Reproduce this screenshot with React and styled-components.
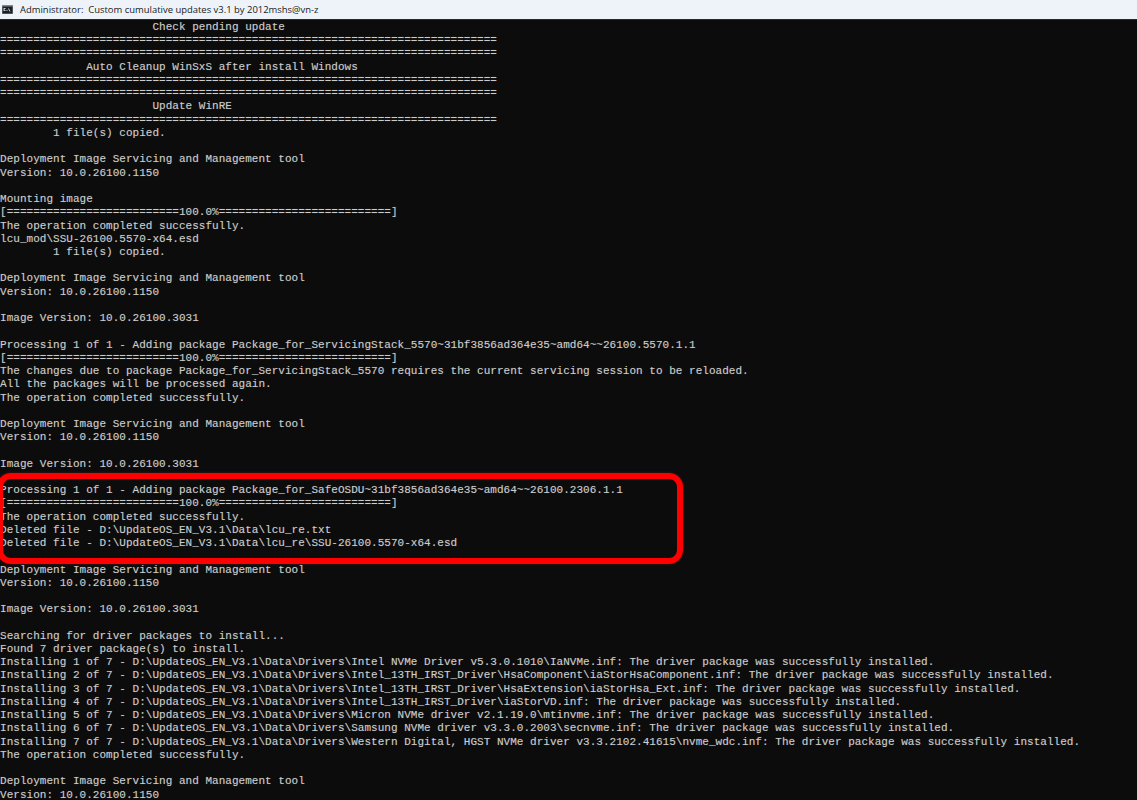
import React from "react";
import styled, { createGlobalStyle } from "styled-components";

const GlobalStyle = createGlobalStyle`
  html, body {
    margin: 0;
    padding: 0;
    height: 100%;
    overflow: hidden;
    background: #0c0c0c;
  }
`;

const Window = styled.div`
  position: relative;
  width: 1137px;
  height: 800px;
  overflow: hidden;
  background: #0c0c0c;
`;

const TitleBar = styled.div`
  display: flex;
  align-items: center;
  gap: 7px;
  height: 19px;
  padding-left: 2px;
  background: #eef3f9;
  border-bottom: 1px solid #2a2a2a;
  box-sizing: content-box;
  margin-bottom: -1px;
`;

const TitleText = styled.span`
  font-family: "Open Sans", "Noto Sans", sans-serif;
  font-size: 9.45px;
  line-height: 19px;
  color: #1a1a1a;
  white-space: pre;
`;

const Output = styled.div`
  padding-top: 2px;
  font-family: "Liberation Mono", "DejaVu Sans Mono", monospace;
  font-size: 11px;
  letter-spacing: 0.025px;
  color: #cccccc;
  text-shadow: 0 0 1px rgba(204, 204, 204, 0.35);
`;

const Line = styled.div`
  height: 13.235px;
  line-height: 13.235px;
  white-space: pre;
`;

const Highlight = styled.div`
  position: absolute;
  left: -3px;
  top: 473px;
  width: 686px;
  height: 91px;
  box-sizing: border-box;
  border: 6.5px solid #fe0000;
  border-radius: 14px;
  box-shadow: 0 0 3px rgba(120, 30, 30, 0.6);
`;

const rule = "=".repeat(75);
const bar = "[" + "=".repeat(26) + "100.0%" + "=".repeat(26) + "]";
const dism = ["Deployment Image Servicing and Management tool", "Version: 10.0.26100.1150", ""];
const root = "D:\\UpdateOS_EN_V3.1\\Data";
const ok = ": The driver package was successfully installed.";

const lines = [
  "                       Check pending update",
  rule,
  rule,
  "             Auto Cleanup WinSxS after install Windows",
  rule,
  rule,
  "                       Update WinRE",
  rule,
  "        1 file(s) copied.",
  "",
  ...dism,
  "Mounting image",
  bar,
  "The operation completed successfully.",
  "lcu_mod\\SSU-26100.5570-x64.esd",
  "        1 file(s) copied.",
  "",
  ...dism,
  "Image Version: 10.0.26100.3031",
  "",
  "Processing 1 of 1 - Adding package Package_for_ServicingStack_5570~31bf3856ad364e35~amd64~~26100.5570.1.1",
  bar,
  "The changes due to package Package_for_ServicingStack_5570 requires the current servicing session to be reloaded.",
  "All the packages will be processed again.",
  "The operation completed successfully.",
  "",
  ...dism,
  "Image Version: 10.0.26100.3031",
  "",
  "Processing 1 of 1 - Adding package Package_for_SafeOSDU~31bf3856ad364e35~amd64~~26100.2306.1.1",
  bar,
  "The operation completed successfully.",
  `Deleted file - ${root}\\lcu_re.txt`,
  `Deleted file - ${root}\\lcu_re\\SSU-26100.5570-x64.esd`,
  "",
  ...dism,
  "Image Version: 10.0.26100.3031",
  "",
  "Searching for driver packages to install...",
  "Found 7 driver package(s) to install.",
  `Installing 1 of 7 - ${root}\\Drivers\\Intel NVMe Driver v5.3.0.1010\\IaNVMe.inf${ok}`,
  `Installing 2 of 7 - ${root}\\Drivers\\Intel_13TH_IRST_Driver\\HsaComponent\\iaStorHsaComponent.inf${ok}`,
  `Installing 3 of 7 - ${root}\\Drivers\\Intel_13TH_IRST_Driver\\HsaExtension\\iaStorHsa_Ext.inf${ok}`,
  `Installing 4 of 7 - ${root}\\Drivers\\Intel_13TH_IRST_Driver\\iaStorVD.inf${ok}`,
  `Installing 5 of 7 - ${root}\\Drivers\\Micron NVMe driver v2.1.19.0\\mtinvme.inf${ok}`,
  `Installing 6 of 7 - ${root}\\Drivers\\Samsung NVMe driver v3.3.0.2003\\secnvme.inf${ok}`,
  `Installing 7 of 7 - ${root}\\Drivers\\Western Digital, HGST NVMe driver v3.3.2102.41615\\nvme_wdc.inf${ok}`,
  "The operation completed successfully.",
  "",
  ...dism,
];

const CmdIcon = () => (
  <svg width="11" height="9" viewBox="0 0 11 9">
    <rect x="0" y="0" width="11" height="9" fill="#7d8792" />
    <rect x="0.5" y="1.5" width="10" height="7" fill="#1b2026" />
    <path d="M1.5 3.5h2M1.5 4.5h1M1.5 5.5h2M4.5 5.5h1M6.5 3.5l1.5 3" stroke="#dfe4ea" strokeWidth="0.9" fill="none" />
  </svg>
);

const App = () => {
  return (
    <Window>
      <GlobalStyle />
      <TitleBar>
        <CmdIcon />
        <TitleText>Administrator:  Custom cumulative updates v3.1 by 2012mshs@vn-z</TitleText>
      </TitleBar>
      <Output>
        {lines.map((text, i) => (
          <Line key={i}>{text}</Line>
        ))}
      </Output>
      <Highlight />
    </Window>
  );
};

export default App;
